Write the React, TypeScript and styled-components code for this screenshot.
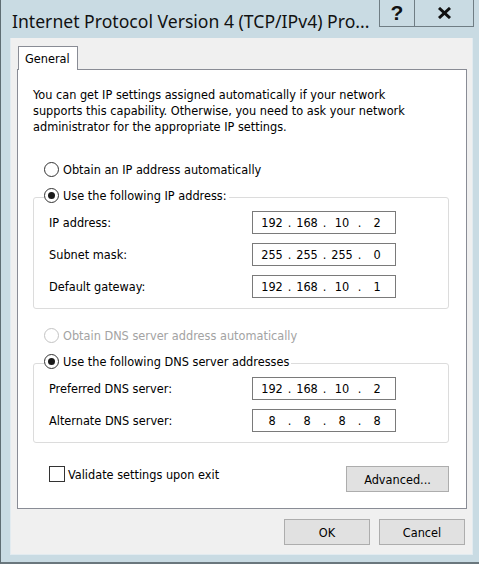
import React, { useState } from 'react';
import styled, { createGlobalStyle } from 'styled-components';

// Dialog fonts: Tahoma-like body, Segoe-like title
const UI_FONT = `"DejaVu Sans Condensed", "DejaVu Sans", sans-serif`;
const TITLE_FONT = `"Noto Sans", "Open Sans", sans-serif`;

const GlobalStyle = createGlobalStyle`
  html, body {
    margin: 0;
    padding: 0;
    background: #c9dbe3;
  }
  * {
    box-sizing: border-box;
  }
`;

const Window = styled.div`
  width: 479px;
  height: 564px;
  background: #c9dbe3;
  border-left: 1px solid #5f6d73;
  border-bottom: 2px solid #6a777d;
  display: flex;
  flex-direction: column;
  font-family: ${UI_FONT};
  font-size: 12.6px;
  color: #000;
`;

const TitleBar = styled.div`
  height: 38px;
  display: flex;
  align-items: flex-start;
  flex-shrink: 0;
`;

const Title = styled.div`
  flex: 1;
  min-width: 0;
  overflow: hidden;
  font-family: ${TITLE_FONT};
  font-size: 17.6px;
  line-height: 24px;
  padding: 9px 0 0 11px;
  color: #111;
  white-space: nowrap;
`;

const CaptionButtons = styled.div`
  display: flex;
  margin-right: 5px;
  flex-shrink: 0;
`;

const CaptionButton = styled.button<{ $width: number }>`
  width: ${p => p.$width}px;
  height: 27px;
  padding: 0;
  margin: 0;
  background: #c9dbe3;
  border: 1px solid #6f7d84;
  border-top: none;
  & + & {
    border-left: none;
  }
  display: flex;
  align-items: center;
  justify-content: center;
  font-family: "Liberation Sans", sans-serif;
  font-weight: 700;
  font-size: 21px;
  color: #111;
`;

const Client = styled.div`
  flex: 1;
  margin: 0 6px 7px 9px;
  background: #f0f0f0;
  border: 1px solid #e2ebf0;
  border-top: none;
  padding: 8px 0 0 6px;
  display: flex;
  flex-direction: column;
`;

const TabStrip = styled.div`
  display: flex;
  padding-left: 1px;
  position: relative;
  z-index: 1;
`;

const Tab = styled.div`
  width: 60px;
  height: 24px;
  background: #fff;
  border: 1px solid #898c95;
  border-bottom: none;
  padding: 4px 0 0 6px;
  font-size: 12.6px;
  line-height: 16px;
`;

const Panel = styled.div`
  width: 450px;
  background: #fff;
  border: 1px solid #898c95;
  margin-top: -1px;
  padding: 17px 17px 16px 15px;
  display: flex;
  flex-direction: column;
`;

const Description = styled.p`
  margin: 0;
  line-height: 16px;
  width: 400px;
`;

const RadioRow = styled.label<{ $disabled?: boolean; $top?: number }>`
  display: flex;
  align-items: center;
  height: 18px;
  margin-left: 11px;
  margin-top: ${p => p.$top ?? 0}px;
  gap: 4px;
  color: ${p => (p.$disabled ? '#a3a3a3' : '#000')};
  white-space: nowrap;
`;

const RadioCircle = styled.span<{ $checked?: boolean; $disabled?: boolean }>`
  width: 15px;
  height: 15px;
  border-radius: 50%;
  border: 1px solid ${p => (p.$disabled ? '#c3c3c3' : '#333')};
  background: #fff;
  display: flex;
  align-items: center;
  justify-content: center;
  flex-shrink: 0;
  &::after {
    content: '';
    display: ${p => (p.$checked ? 'block' : 'none')};
    width: 7px;
    height: 7px;
    border-radius: 50%;
    background: #1a1a1a;
  }
`;

const Group = styled.fieldset<{ $top: number }>`
  margin: ${p => p.$top}px 0 0 0;
  padding: 3px 0 10px 0;
  border: 1px solid #dcdcdc;
  border-radius: 3px;
  min-width: 0;
`;

const GroupLegend = styled.legend`
  padding: 0 2px 0 0;
  margin-left: 10px;
  height: 22px;
  & > label {
    margin-left: 0;
  }
`;

const FieldGrid = styled.div`
  display: grid;
  grid-template-columns: 1fr 144px;
  row-gap: 9px;
  padding: 0 52px 0 15px;
  align-items: center;
`;

const FieldLabel = styled.span`
  line-height: 16px;
`;

const IpBox = styled.div`
  height: 23px;
  border: 1px solid #7a7a7a;
  background: #fff;
  display: flex;
  align-items: center;
  padding-left: 4px;
`;

const Octet = styled.span`
  width: 30px;
  text-align: center;
`;

const Dot = styled.span`
  width: 5px;
  text-align: center;
`;

const BottomRow = styled.div`
  display: flex;
  justify-content: space-between;
  align-items: flex-start;
  margin-top: 23px;
`;

const CheckRow = styled.label`
  display: flex;
  align-items: center;
  gap: 3px;
  margin: 0 0 0 16px;
  height: 16px;
`;

const CheckBox = styled.span`
  width: 16px;
  height: 16px;
  border: 1px solid #333;
  background: #fff;
`;

const Button = styled.button<{ $width: number }>`
  width: ${p => p.$width}px;
  height: 26px;
  background: #e1e1e1;
  border: 1px solid #adadad;
  font-family: ${UI_FONT};
  font-size: 12.6px;
  color: #000;
  padding: 0;
  margin: 0;
`;

const DialogButtons = styled.div`
  display: flex;
  justify-content: flex-end;
  gap: 9px;
  margin-top: 10px;
  padding-right: 7px;
`;

function CloseGlyph() {
  return (
    <svg width="15" height="12" viewBox="0 0 15 12">
      <path d="M2 1 L13 11 M13 1 L2 11" stroke="#111" strokeWidth="3" fill="none" />
    </svg>
  );
}

function IpField({ value }: { value: string }) {
  const parts = value.split('.');
  return (
    <IpBox>
      {parts.map((part, i) => (
        <React.Fragment key={i}>
          <Octet>{part}</Octet>
          {i < parts.length - 1 && <Dot>.</Dot>}
        </React.Fragment>
      ))}
    </IpBox>
  );
}

function Radio({ checked, disabled, label, top }: { checked?: boolean; disabled?: boolean; label: string; top?: number }) {
  return (
    <RadioRow $disabled={disabled} $top={top}>
      <RadioCircle $checked={checked} $disabled={disabled} />
      {label}
    </RadioRow>
  );
}

const ipRows = [
  { label: 'IP address:', value: '192.168.10.2' },
  { label: 'Subnet mask:', value: '255.255.255.0' },
  { label: 'Default gateway:', value: '192.168.10.1' },
];

const dnsRows = [
  { label: 'Preferred DNS server:', value: '192.168.10.2' },
  { label: 'Alternate DNS server:', value: '8.8.8.8' },
];

export default function App() {
  const [validate] = useState(false);

  return (
    <>
      <GlobalStyle />
      <Window>
        <TitleBar>
          <Title>Internet Protocol Version 4 (TCP/IPv4) Pro...</Title>
          <CaptionButtons>
            <CaptionButton $width={36}>?</CaptionButton>
            <CaptionButton $width={59}>
              <CloseGlyph />
            </CaptionButton>
          </CaptionButtons>
        </TitleBar>

        <Client>
          <TabStrip>
            <Tab>General</Tab>
          </TabStrip>
          <Panel>
            <Description>
              You can get IP settings assigned automatically if your network
              supports this capability. Otherwise, you need to ask your network
              administrator for the appropriate IP settings.
            </Description>

            <Radio label="Obtain an IP address automatically" top={25} />
            <Group $top={8}>
              <GroupLegend>
                <Radio checked label="Use the following IP address:" />
              </GroupLegend>
              <FieldGrid>
                {ipRows.map(row => (
                  <React.Fragment key={row.label}>
                    <FieldLabel>{row.label}</FieldLabel>
                    <IpField value={row.value} />
                  </React.Fragment>
                ))}
              </FieldGrid>
            </Group>

            <Radio disabled label="Obtain DNS server address automatically" top={17} />
            <Group $top={8}>
              <GroupLegend>
                <Radio checked label="Use the following DNS server addresses" />
              </GroupLegend>
              <FieldGrid>
                {dnsRows.map(row => (
                  <React.Fragment key={row.label}>
                    <FieldLabel>{row.label}</FieldLabel>
                    <IpField value={row.value} />
                  </React.Fragment>
                ))}
              </FieldGrid>
            </Group>

            <BottomRow>
              <CheckRow>
                <CheckBox aria-checked={validate} />
                Validate settings upon exit
              </CheckRow>
              <Button $width={103}>Advanced...</Button>
            </BottomRow>
          </Panel>

          <DialogButtons>
            <Button $width={86}>OK</Button>
            <Button $width={86}>Cancel</Button>
          </DialogButtons>
        </Client>
      </Window>
    </>
  );
}
